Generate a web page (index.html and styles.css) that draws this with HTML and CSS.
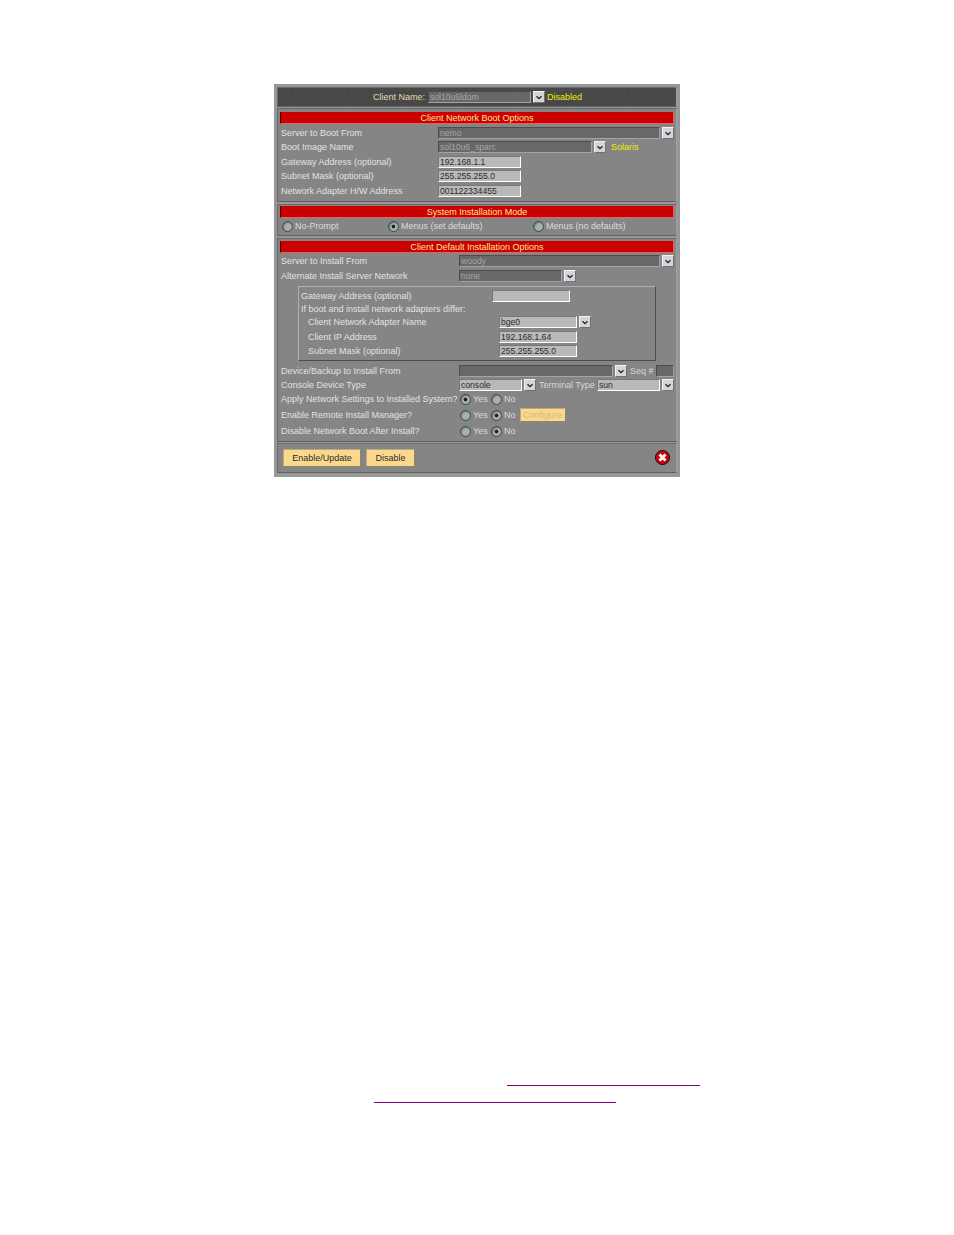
FILE: index.html
```html
<!DOCTYPE html>
<html lang="en">
<head>
    <meta charset="UTF-8">
    <title>Client Network Boot</title>
    <link rel="stylesheet" href="styles.css">
</head>
<body>
    <svg class="sprite" width="0" height="0">
        <symbol id="chev" viewBox="0 0 12 12"><path d="M3 5l3 3 3-3" fill="none" stroke="#222" stroke-width="1.6"/></symbol>
    </svg>
    <div class="panel">
        <div class="section head">
            <span class="lbl name-lbl">Client Name:</span>
            <span class="field dark name-field">sol10u6ldom</span>
            <span class="drop"><svg><use href="#chev"/></svg></span>
            <span class="yellow">Disabled</span>
        </div>

        <div class="section s1">
            <div class="bar">Client Network Boot Options</div>
            <div class="rows">
                <div class="row">
                    <span class="lbl w158">Server to Boot From</span>
                    <span class="field dark w222">nemo</span>
                    <span class="drop"><svg><use href="#chev"/></svg></span>
                </div>
                <div class="row">
                    <span class="lbl w158">Boot Image Name</span>
                    <span class="field dark w154">sol10u6_sparc</span>
                    <span class="drop"><svg><use href="#chev"/></svg></span>
                    <span class="yellow solaris">Solaris</span>
                </div>
                <div class="row">
                    <span class="lbl w158">Gateway Address (optional)</span>
                    <span class="field light w83">192.168.1.1</span>
                </div>
                <div class="row">
                    <span class="lbl w158">Subnet Mask (optional)</span>
                    <span class="field light w83">255.255.255.0</span>
                </div>
                <div class="row">
                    <span class="lbl w158">Network Adapter H/W Address</span>
                    <span class="field light w83">001122334455</span>
                </div>
            </div>
        </div>

        <div class="section s2">
            <div class="bar">System Installation Mode</div>
            <div class="modes">
                <span class="opt w106"><i class="radio"></i>No-Prompt</span>
                <span class="opt w145"><i class="radio on"></i>Menus (set defaults)</span>
                <span class="opt"><i class="radio"></i>Menus (no defaults)</span>
            </div>
        </div>

        <div class="section s3">
            <div class="bar">Client Default Installation Options</div>
            <div class="row first">
                <span class="lbl w179">Server to Install From</span>
                <span class="field dark w201">woody</span>
                <span class="drop"><svg><use href="#chev"/></svg></span>
            </div>
            <div class="row">
                <span class="lbl w179">Alternate Install Server Network</span>
                <span class="field dark w103">none</span>
                <span class="drop"><svg><use href="#chev"/></svg></span>
            </div>

            <div class="inset">
                <div class="irow">
                    <span class="lbl w191">Gateway Address (optional)</span>
                    <span class="field light w78"></span>
                </div>
                <div class="irow short">
                    <span class="lbl">If boot and install network adapters differ:</span>
                </div>
                <div class="irow">
                    <span class="lbl sub">Client Network Adapter Name</span>
                    <span class="field light w78">bge0</span>
                    <span class="drop"><svg><use href="#chev"/></svg></span>
                </div>
                <div class="irow gap1">
                    <span class="lbl sub">Client IP Address</span>
                    <span class="field light w78">192.168.1.64</span>
                </div>
                <div class="irow">
                    <span class="lbl sub">Subnet Mask (optional)</span>
                    <span class="field light w78">255.255.255.0</span>
                </div>
            </div>

            <div class="tail">
                <div class="trow">
                    <span class="lbl w179">Device/Backup to Install From</span>
                    <span class="field dark w154"></span>
                    <span class="drop"><svg><use href="#chev"/></svg></span>
                    <span class="lbl seq">Seq #</span>
                    <span class="field dark w18"></span>
                </div>
                <div class="trow">
                    <span class="lbl w179">Console Device Type</span>
                    <span class="field light w63">console</span>
                    <span class="drop"><svg><use href="#chev"/></svg></span>
                    <span class="lbl term">Terminal Type</span>
                    <span class="field light w63">sun</span>
                    <span class="drop"><svg><use href="#chev"/></svg></span>
                </div>
                <div class="trow">
                    <span class="lbl w179">Apply Network Settings to Installed System?</span>
                    <span class="opt yes"><i class="radio on"></i>Yes</span>
                    <span class="opt"><i class="radio"></i>No</span>
                </div>
                <div class="trow tall">
                    <span class="lbl w179">Enable Remote Install Manager?</span>
                    <span class="opt yes"><i class="radio"></i>Yes</span>
                    <span class="opt"><i class="radio on"></i>No</span>
                    <span class="btn off">Configure</span>
                </div>
                <div class="trow">
                    <span class="lbl w179">Disable Network Boot After Install?</span>
                    <span class="opt yes"><i class="radio"></i>Yes</span>
                    <span class="opt"><i class="radio on"></i>No</span>
                </div>
            </div>
        </div>

        <div class="section foot">
            <span class="btn big w78">Enable/Update</span>
            <span class="btn big w49">Disable</span>
            <svg class="close" viewBox="0 0 16 16">
                <circle cx="8" cy="8" r="7.5" fill="#c80010" stroke="#200"/>
                <path d="M4.8 4.8l6.4 6.4M11.2 4.8l-6.4 6.4" stroke="#fff" stroke-width="3"/>
            </svg>
        </div>
    </div>

    <div class="link link-a"></div>
    <div class="link link-b"></div>
</body>
</html>
```

FILE: styles.css
```css
body {
    margin: 0;
    padding-top: 84px;
    background-color: #fff;
    font-family: "Liberation Sans", Arial, sans-serif;
    font-size: 9px;
}
.sprite {
    display: block;
    height: 0;
}
.panel {
    box-sizing: border-box;
    width: 406px;
    height: 393px;
    margin-left: 274px;
    padding: 3px;
    background-color: #979797;
    display: flex;
    flex-direction: column;
}
.section {
    box-sizing: border-box;
    background-color: #858585;
    border: 1px solid;
    border-color: #6a6a6a #a2a2a2 #5f5f5f #6a6a6a;
    padding: 0 2px;
    flex: none;
}
.head {
    height: 20px;
    margin-bottom: 1px;
    background-color: #484848;
    background-image: radial-gradient(#525252 0.5px, transparent 0.6px);
    background-size: 7px 5px;
    display: flex;
    align-items: center;
    padding-left: 94px;
}
.s1 {
    height: 94px;
    margin-bottom: 2px;
    padding-top: 3px;
}
.s2 {
    height: 32px;
    margin-bottom: 2px;
    padding-top: 1px;
}
.s3 {
    height: 204px;
    margin-bottom: 1px;
    padding-top: 2px;
}
.foot {
    height: 30px;
    display: flex;
    align-items: center;
    padding-left: 5px;
}
.bar {
    box-sizing: border-box;
    height: 12px;
    line-height: 12px;
    background-color: #cc0000;
    border-left: 1px solid #500;
    border-bottom: 1px solid #e86060;
    border-right: 1px solid #e86060;
    color: #ffe890;
    text-align: center;
}
.rows {
    margin-top: 1.6px;
}
.row {
    height: 14.5px;
    display: flex;
    align-items: center;
}
.first {
    margin-top: 1px;
}
.lbl {
    color: #e2e2e2;
    white-space: nowrap;
    padding-left: 1px;
    box-sizing: border-box;
    flex: none;
}
.name-lbl {
    width: 56px;
    color: #e6d9a8;
}
.name-field {
    width: 103px;
}
.w158 { width: 158px; }
.w179 { width: 179px; }
.w191 { width: 192px; }
.field {
    box-sizing: border-box;
    height: 12px;
    line-height: 10px;
    padding-left: 1px;
    border: 1px solid;
    flex: none;
    overflow: hidden;
    white-space: nowrap;
    font-size: 8.6px;
}
.dark {
    background-color: #686868;
    border-color: #4c4c4c #a4a4a4 #a4a4a4 #4c4c4c;
    color: #a6a6a6;
}
.light {
    background-color: #b9b9b9;
    border-color: #777 #fff #fff #777;
    color: #2c2c2c;
}
.w18 { width: 18px; }
.w63 { width: 63px; }
.w78 { width: 78px; }
.w83 { width: 83px; }
.w103 { width: 103px; }
.w154 { width: 154px; }
.w201 { width: 201px; }
.w222 { width: 222px; }
.drop {
    box-sizing: border-box;
    width: 12px;
    height: 12px;
    margin-left: 2px;
    background-color: #d4d4dc;
    border: 1px solid;
    border-color: #f4f4f4 #707070 #707070 #f4f4f4;
    display: block;
    flex: none;
}
.drop svg {
    display: block;
    width: 10px;
    height: 10px;
}
.yellow {
    color: #f0f000;
    margin-left: 2px;
}
.solaris {
    margin-left: 5px;
}
.modes {
    display: flex;
    align-items: center;
    height: 14px;
    margin-top: 1px;
    padding-left: 2px;
}
.opt {
    display: flex;
    align-items: center;
    color: #dcdcdc;
    flex: none;
}
.w106 { width: 106px; }
.w145 { width: 145px; }
.radio {
    box-sizing: border-box;
    width: 11px;
    height: 11px;
    margin-right: 2px;
    border-radius: 50%;
    border: 1px solid #444;
    background-color: #a3b2ae;
    box-shadow: inset 1px 1px 1px #6a7a76;
    flex: none;
}
.radio.on {
    background: radial-gradient(circle, #222 0 1.6px, #a3b2ae 2.2px);
}
.inset {
    box-sizing: border-box;
    width: 358px;
    height: 75px;
    margin: 3px 0 3px 18px;
    padding: 2px 0 0 1px;
    border: 1px solid;
    border-color: #b0b0b0 #4c4c4c #4c4c4c #b0b0b0;
}
.irow {
    height: 14px;
    display: flex;
    align-items: center;
}
.short {
    height: 12px;
}
.gap1 {
    margin-top: 1px;
}
.sub {
    width: 199px;
    padding-left: 8px;
}
.trow {
    height: 14px;
    display: flex;
    align-items: center;
}
.tall {
    height: 16px;
    margin: 1px 0;
}
.seq {
    padding-left: 3px;
    width: 29px;
    color: #d8d8d8;
}
.term {
    width: 61px;
    padding-left: 3px;
    color: #d8d8d8;
}
.yes {
    box-sizing: border-box;
    width: 32px;
    padding-left: 1px;
}
.btn {
    box-sizing: border-box;
    display: flex;
    align-items: center;
    justify-content: center;
    background-color: #fbd98c;
    border: 1px solid;
    border-color: #b8ab80 #8d8668 #8d8668 #b8ab80;
    color: #2c2c2c;
    flex: none;
}
.off {
    width: 46px;
    height: 14px;
    margin-left: 4px;
    color: #d9b877;
}
.big {
    height: 18px;
    margin-right: 5px;
}
.w49 { width: 49px; }
.close {
    width: 15px;
    height: 15px;
    margin-left: auto;
    margin-right: 4px;
    margin-bottom: 1px;
}
.link {
    height: 1px;
    background-color: #800080;
}
.link-a {
    width: 193px;
    margin: 608px 0 0 507px;
}
.link-b {
    width: 242px;
    margin: 16px 0 0 374px;
}
```
